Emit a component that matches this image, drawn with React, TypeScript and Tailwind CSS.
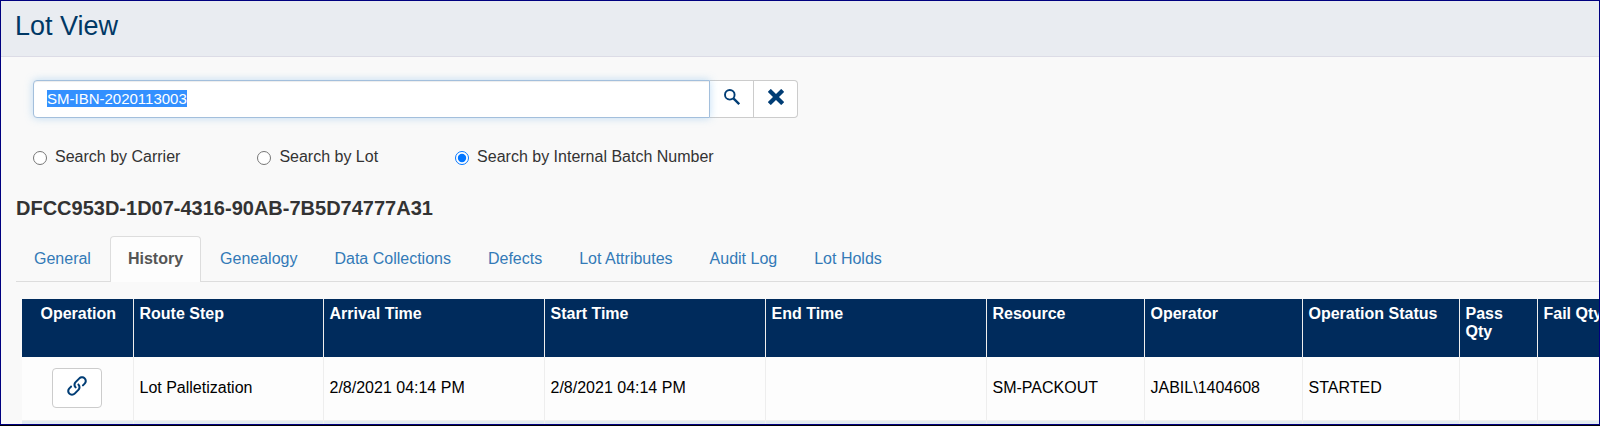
import { useEffect, useRef, useState } from 'react';
import { ImCross, ImLink } from 'react-icons/im';

const searchModes = [
  { id: 'carrier', label: 'Search by Carrier' },
  { id: 'lot', label: 'Search by Lot' },
  { id: 'batch', label: 'Search by Internal Batch Number' },
];

const tabs = [
  'General',
  'History',
  'Genealogy',
  'Data Collections',
  'Defects',
  'Lot Attributes',
  'Audit Log',
  'Lot Holds',
];

const columns = [
  { title: 'Operation', width: 'w-[111px]' },
  { title: 'Route Step', width: 'w-[190px]' },
  { title: 'Arrival Time', width: 'w-[221px]' },
  { title: 'Start Time', width: 'w-[221px]' },
  { title: 'End Time', width: 'w-[221px]' },
  { title: 'Resource', width: 'w-[158px]' },
  { title: 'Operator', width: 'w-[158px]' },
  { title: 'Operation Status', width: 'w-[157px]' },
  { title: 'Pass Qty', width: 'w-[78px]' },
  { title: 'Fail Qty', width: 'w-[80px]' },
];

const row = [
  'Lot Palletization',
  '2/8/2021 04:14 PM',
  '2/8/2021 04:14 PM',
  '',
  'SM-PACKOUT',
  'JABIL\\1404608',
  'STARTED',
  '',
  '',
];

function SearchIcon() {
  return (
    <svg width="16" height="16" viewBox="0 0 16 16" fill="none" stroke="currentColor" aria-hidden="true">
      <circle cx="5.8" cy="5.8" r="4.8" strokeWidth="1.9" />
      <path d="M9.4 9.4L15.2 15.2" strokeWidth="2.3" />
    </svg>
  );
}

function SearchPanel() {
  const [query, setQuery] = useState('SM-IBN-2020113003');
  const [mode, setMode] = useState('batch');
  const field = useRef<HTMLInputElement>(null);

  useEffect(() => {
    field.current?.focus();
    field.current?.select();
  }, []);

  return (
    <form className="pl-8 pt-[23px]" onSubmit={(e) => e.preventDefault()}>
      <div className="flex w-full max-w-[765px]">
        <input
          ref={field}
          type="text"
          aria-label="Lot search"
          value={query}
          onChange={(e) => setQuery(e.target.value)}
          className="relative h-[38px] min-w-0 grow rounded-l border border-[#a3bfdc] bg-white px-[13px] pb-0.5 text-[15px] text-[#333] shadow-[inset_0_1px_1px_rgba(0,0,0,0.075),0_0_8px_rgba(102,175,233,0.4)] outline-none selection:bg-[#3390ff] selection:text-white"
        />
        <button
          type="submit"
          aria-label="Search"
          className="flex h-[38px] w-11 items-center justify-center border-y border-r border-[#ccc] bg-white pb-1 text-[#003d75]"
        >
          <SearchIcon />
        </button>
        <button
          type="button"
          aria-label="Clear"
          onClick={() => setQuery('')}
          className="flex h-[38px] w-11 items-center justify-center rounded-r border-y border-r border-[#ccc] bg-white pb-1 text-[#003d75]"
        >
          <ImCross size={16} />
        </button>
      </div>
      <div className="mt-[30px] flex h-[18px] gap-[77px]">
        {searchModes.map((m) => (
          <label key={m.id} className="flex items-center gap-2 whitespace-nowrap leading-[18px]">
            <input
              type="radio"
              name="mode"
              checked={mode === m.id}
              onChange={() => setMode(m.id)}
              className="mt-0.5 size-[14px]"
            />
            {m.label}
          </label>
        ))}
      </div>
    </form>
  );
}

function Tabs() {
  return (
    <nav className="ml-[15px] mt-4 flex gap-px border-b border-[#ddd]">
      {tabs.map((t) => (
        <a
          key={t}
          href={'#' + t.toLowerCase().replace(' ', '-')}
          className={
            t === 'History'
              ? '-mb-px rounded-t border border-b-0 border-[#ddd] bg-[#fdfdfd] px-[17px] pt-[13px] pb-[14px] font-bold leading-[18px] text-[#555]'
              : 'border border-b-0 border-transparent px-[17px] pt-[13px] pb-[13px] leading-[18px] text-[#337ab7]'
          }
        >
          {t}
        </a>
      ))}
    </nav>
  );
}

function HistoryTable() {
  return (
    <div className="ml-[21px] mt-[17px] overflow-hidden">
      <table className="w-full min-w-[1595px] table-fixed border-collapse text-black">
        <thead>
          <tr className="h-[58px] bg-[#002b5c] align-top text-white">
            {columns.map((c, i) => (
              <th
                key={c.title}
                scope="col"
                className={
                  c.width +
                  ' border-r border-[#eee] pr-1 pl-1.5 pt-1.5 font-bold leading-[18px] ' +
                  (i === 0 ? 'text-center' : 'text-left')
                }
              >
                {c.title}
              </th>
            ))}
          </tr>
        </thead>
        <tbody>
          <tr className="h-[63px] border-b border-[#eee] bg-[#fdfdfd]">
            <td className="border-r border-[#eee]">
              <button
                type="button"
                aria-label="Open operation"
                className="mx-auto flex h-10 w-[50px] items-center justify-center rounded border border-[#ccc] bg-white pb-1 text-[#003d75]"
              >
                <ImLink size={20} />
              </button>
            </td>
            {row.map((value, i) => (
              <td key={i} className="border-r border-[#eee] pr-1 pl-1.5">
                {value}
              </td>
            ))}
          </tr>
          <tr className="h-[63px] bg-[#e1eaf0]">
            {columns.map((c) => (
              <td key={c.title} className="border-r border-[#eee]" />
            ))}
          </tr>
        </tbody>
      </table>
    </div>
  );
}

export default function App() {
  return (
    <div className="h-screen overflow-hidden bg-black pb-px font-['Liberation_Sans',Arial,sans-serif] text-base text-[#333]">
      <div className="h-full overflow-hidden border border-[#000080] bg-[#f9f9f9]">
        <header className="border-b border-[#dcdce6] bg-[#e9ecf1] pt-[9px] pb-[14px] pl-[14px]">
          <h1 className="text-[27px] leading-8 text-[#003865]">Lot View</h1>
        </header>
        <SearchPanel />
        <h2 className="mt-[30px] ml-[15px] text-xl font-bold leading-6">DFCC953D-1D07-4316-90AB-7B5D74777A31</h2>
        <Tabs />
        <HistoryTable />
      </div>
    </div>
  );
}
